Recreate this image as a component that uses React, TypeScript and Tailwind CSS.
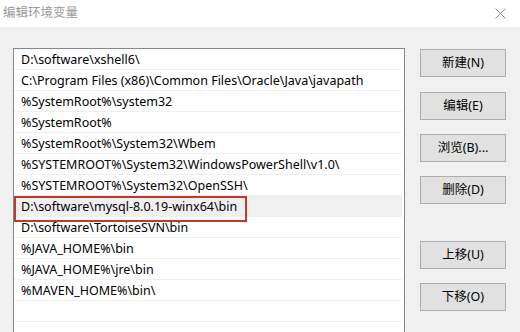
import React from "react";

const paths = [
  "D:\\software\\xshell6\\",
  "C:\\Program Files (x86)\\Common Files\\Oracle\\Java\\javapath",
  "%SystemRoot%\\system32",
  "%SystemRoot%",
  "%SystemRoot%\\System32\\Wbem",
  "%SYSTEMROOT%\\System32\\WindowsPowerShell\\v1.0\\",
  "%SYSTEMROOT%\\System32\\OpenSSH\\",
  "D:\\software\\mysql-8.0.19-winx64\\bin",
  "D:\\software\\TortoiseSVN\\bin",
  "%JAVA_HOME%\\bin",
  "%JAVA_HOME%\\jre\\bin",
  "%MAVEN_HOME%\\bin\\",
  "",
  "",
];

const SELECTED = 7;

const Btn = ({ label, className = "" }: { label: string; className?: string }) => (
  <div
    className={`w-[86px] h-[28px] border border-[#adadad] bg-[#e1e1e1] flex items-center justify-center text-[12.5px] text-black ${className}`}
  >
    {label}
  </div>
);

export default function App() {
  return (
    <div
      className="w-[520px] h-[332px] overflow-hidden bg-[#f0f0f0] flex flex-col"
      style={{ fontFamily: '"Noto Sans", "Noto Sans CJK SC", sans-serif' }}
    >
      <div className="h-[27px] bg-white flex items-center justify-between pl-[3px] pr-[14px] shrink-0">
        <span className="text-[12.5px] text-[#999999]">编辑环境变量</span>
        <svg width="11" height="11" viewBox="0 0 11 11" className="text-[#8a8a8a]">
          <path d="M0.5 0.5 L10.5 10.5 M10.5 0.5 L0.5 10.5" stroke="currentColor" strokeWidth="1" />
        </svg>
      </div>
      <div className="flex pl-[13px] pt-[21px]">
        <div className="w-[392px] h-[300px] border border-[#828790] bg-white shrink-0">
          {paths.map((p, i) => (
            <div
              key={i}
              className={`relative h-[21px] mr-[2px] border-b border-[#f0f0f0] flex items-center pl-[7px] pt-[3px] text-[12.5px] text-black whitespace-nowrap ${
                i === SELECTED ? "bg-[#f0f0f0]" : ""
              }`}
            >
              {p}
              {i === SELECTED && (
                <div className="absolute left-0 top-0 w-[233px] h-[26px] border-2 border-[#c0392b]" />
              )}
            </div>
          ))}
        </div>
        <div className="ml-[15px] pt-[1px] flex flex-col">
          <Btn label="新建(N)" />
          <Btn label="编辑(E)" className="mt-[15px]" />
          <Btn label="浏览(B)..." className="mt-[14px]" />
          <Btn label="删除(D)" className="mt-[14px]" />
          <Btn label="上移(U)" className="mt-[37px]" />
          <Btn label="下移(O)" className="mt-[14px]" />
        </div>
      </div>
    </div>
  );
}
